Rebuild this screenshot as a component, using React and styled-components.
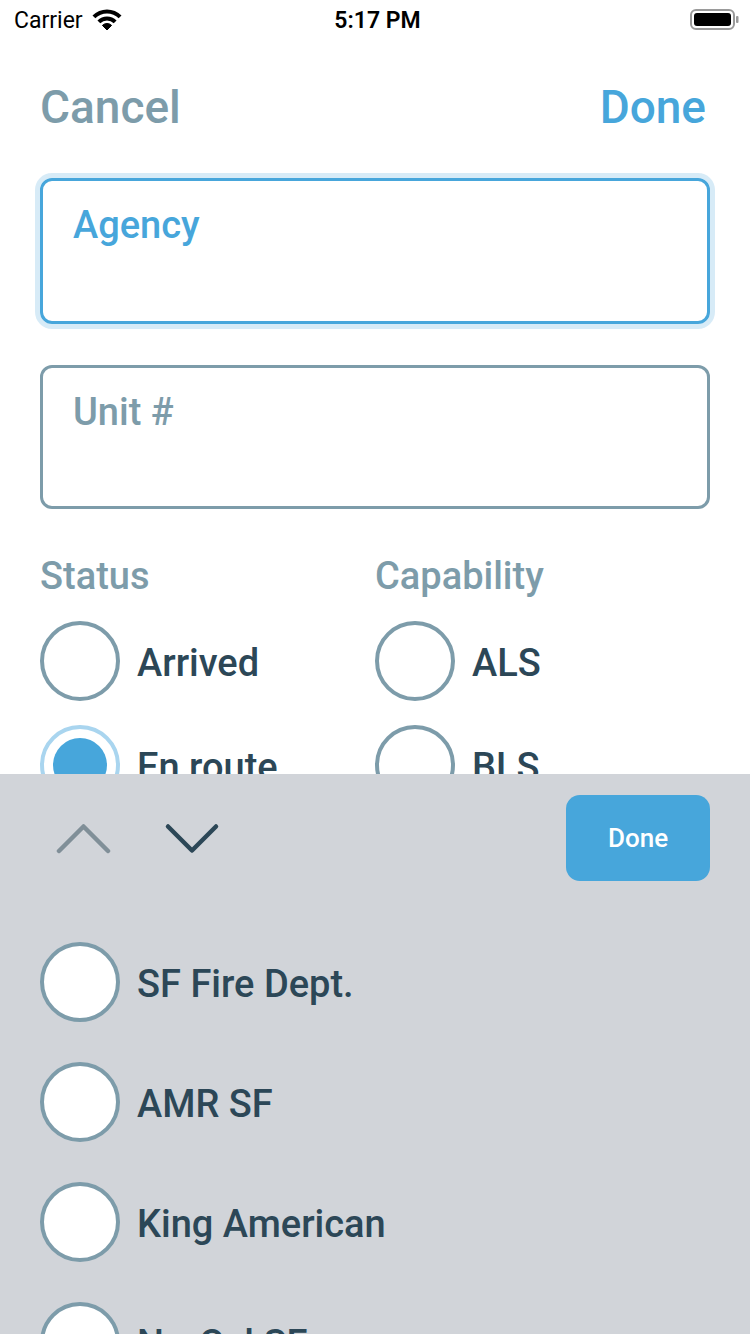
import React from "react";
import styled, { createGlobalStyle } from "styled-components";

const BLUE = "#47a6db";
const SLATE = "#7d9caa";
const INK = "#2c4757";
const PANEL = "#d1d4d9";

const Global = createGlobalStyle`
  html, body { margin: 0; padding: 0; background: #ffffff; }
  body { font-family: Roboto, "Noto Sans", sans-serif; }
  * { box-sizing: border-box; }
`;

const Screen = styled.div`
  width: 750px;
  height: 1334px;
  display: flex;
  flex-direction: column;
  overflow: hidden;
  background: #ffffff;
`;

const StatusBar = styled.div`
  height: 40px;
  flex: none;
  display: grid;
  grid-template-columns: 1fr auto 1fr;
  align-items: center;
  padding: 0 9px 0 14px;
  font-family: Roboto, "Liberation Sans", sans-serif;
  color: #000;
`;

const Carrier = styled.div`
  display: flex;
  align-items: center;
  gap: 9px;
  font-size: 23px;
  font-weight: 400;
`;

const Clock = styled.div`
  font-size: 23px;
  font-weight: 600;
`;

const BatteryWrap = styled.div`
  justify-self: end;
  display: flex;
  align-items: center;
`;

const Main = styled.div`
  flex: 1;
  min-height: 0;
  overflow: hidden;
  padding: 0 40px;
`;

const Header = styled.div`
  height: 134px;
  display: flex;
  align-items: center;
  justify-content: space-between;
`;

const HeaderButton = styled.span`
  font-size: 46px;
  font-weight: 500;
  color: ${(p) => (p.$primary ? BLUE : SLATE)};
  margin-right: ${(p) => (p.$primary ? 4 : 0)}px;
`;

const Field = styled.div`
  height: ${(p) => p.$h}px;
  margin-top: ${(p) => p.$mt}px;
  border: 3px solid ${(p) => (p.$focused ? BLUE : SLATE)};
  border-radius: 12px;
  padding: 22px 30px;
  box-shadow: ${(p) => (p.$focused ? "0 0 0 5px rgba(71,166,219,0.22)" : "none")};
`;

const FieldLabel = styled.div`
  font-size: 38px;
  line-height: 44px;
  font-weight: 500;
  color: ${(p) => (p.$focused ? BLUE : SLATE)};
`;

const Columns = styled.div`
  margin-top: 45px;
  display: grid;
  grid-template-columns: 335px 335px;
`;

const Column = styled.div`
  display: flex;
  flex-direction: column;
`;

const SectionTitle = styled.div`
  font-size: 38px;
  line-height: 44px;
  font-weight: 500;
  color: ${SLATE};
`;

const Options = styled.div`
  margin-top: ${(p) => p.$mt}px;
  display: flex;
  flex-direction: column;
  gap: ${(p) => p.$gap}px;
`;

const OptionRow = styled.div`
  display: flex;
  align-items: center;
  gap: 17px;
  height: 80px;
`;

const Radio = styled.div`
  width: 80px;
  height: 80px;
  flex: none;
  border-radius: 50%;
  border: 4px solid ${(p) => (p.$checked ? "#a9d5ef" : SLATE)};
  background: #ffffff;
  display: flex;
  align-items: center;
  justify-content: center;
`;

const RadioDot = styled.div`
  width: 54px;
  height: 54px;
  border-radius: 50%;
  background: ${BLUE};
`;

const OptionLabel = styled.span`
  font-size: 38px;
  font-weight: 500;
  color: ${INK};
  padding-top: 4px;
`;

const Panel = styled.div`
  height: 560px;
  flex: none;
  background: ${PANEL};
  overflow: hidden;
  display: flex;
  flex-direction: column;
`;

const Toolbar = styled.div`
  height: 128px;
  flex: none;
  display: flex;
  align-items: center;
  padding: 0 40px 0 55px;
`;

const NavGroup = styled.div`
  display: flex;
  align-items: center;
  gap: 53px;
`;

const DoneButton = styled.button`
  margin-left: auto;
  width: 144px;
  height: 86px;
  border: none;
  border-radius: 14px;
  background: ${BLUE};
  color: #ffffff;
  font-family: Roboto, sans-serif;
  font-size: 26px;
  font-weight: 500;
  padding: 0;
`;

const PickerList = styled.div`
  padding: 40px 40px 0;
  display: flex;
  flex-direction: column;
  gap: 40px;
`;

function sector(cx, cy, r1, r2, deg) {
  const s = Math.sin((deg * Math.PI) / 180);
  const c = Math.cos((deg * Math.PI) / 180);
  const p = (r, sign) => `${(cx + sign * r * s).toFixed(2)} ${(cy - r * c).toFixed(2)}`;
  if (r1 === 0) {
    return `M ${cx} ${cy} L ${p(r2, -1)} A ${r2} ${r2} 0 0 1 ${p(r2, 1)} Z`;
  }
  return `M ${p(r2, -1)} A ${r2} ${r2} 0 0 1 ${p(r2, 1)} L ${p(r1, 1)} A ${r1} ${r1} 0 0 0 ${p(r1, -1)} Z`;
}

const WifiIcon = () => (
  <svg width="30" height="22" viewBox="0 0 30 22">
    <path d={sector(15, 21, 0, 6.5, 45)} fill="#000" strokeLinejoin="round" stroke="#000" strokeWidth="1" />
    <path d={sector(15, 21, 9.5, 13.5, 45)} fill="#000" />
    <path d={sector(15, 21, 16.5, 20.5, 45)} fill="#000" />
  </svg>
);

const BatteryIcon = () => (
  <svg width="52" height="24" viewBox="0 0 52 24">
    <rect x="2" y="2" width="43" height="19" rx="5" fill="none" stroke="#9a9a9a" strokeWidth="2" />
    <rect x="5" y="5" width="37" height="13" rx="3" fill="#000" />
    <rect x="47" y="8" width="2.5" height="7" rx="1" fill="#9a9a9a" />
  </svg>
);

const ChevronUp = () => (
  <svg width="56" height="34" viewBox="0 0 56 34">
    <polyline points="4,30 28.5,5.5 53,30" fill="none" stroke="#808f98" strokeWidth="4.5" strokeLinecap="round" strokeLinejoin="round" />
  </svg>
);

const ChevronDown = () => (
  <svg width="56" height="34" viewBox="0 0 56 34">
    <polyline points="4,5.5 28,29.5 52,5.5" fill="none" stroke={INK} strokeWidth="4.5" strokeLinecap="round" strokeLinejoin="round" />
  </svg>
);

const Option = ({ label, checked }) => (
  <OptionRow>
    <Radio $checked={checked}>{checked && <RadioDot />}</Radio>
    <OptionLabel>{label}</OptionLabel>
  </OptionRow>
);

const status = [
  { label: "Arrived" },
  { label: "En route", checked: true },
  { label: "Staged" },
];
const capability = [{ label: "ALS" }, { label: "BLS" }, { label: "CCT" }];
const agencies = ["SF Fire Dept.", "AMR SF", "King American", "NorCal SF"];

export default function App() {
  return (
    <Screen>
      <Global />
      <StatusBar>
        <Carrier>
          <span>Carrier</span>
          <WifiIcon />
        </Carrier>
        <Clock>5:17 PM</Clock>
        <BatteryWrap>
          <BatteryIcon />
        </BatteryWrap>
      </StatusBar>
      <Main>
        <Header>
          <HeaderButton>Cancel</HeaderButton>
          <HeaderButton $primary>Done</HeaderButton>
        </Header>
        <Field $focused $h={146} $mt={4}>
          <FieldLabel $focused>Agency</FieldLabel>
        </Field>
        <Field $h={144} $mt={41}>
          <FieldLabel>Unit #</FieldLabel>
        </Field>
        <Columns>
          <Column>
            <SectionTitle>Status</SectionTitle>
            <Options $mt={23} $gap={24}>
              {status.map((o) => (
                <Option key={o.label} {...o} />
              ))}
            </Options>
          </Column>
          <Column>
            <SectionTitle>Capability</SectionTitle>
            <Options $mt={23} $gap={24}>
              {capability.map((o) => (
                <Option key={o.label} {...o} />
              ))}
            </Options>
          </Column>
        </Columns>
      </Main>
      <Panel>
        <Toolbar>
          <NavGroup>
            <ChevronUp />
            <ChevronDown />
          </NavGroup>
          <DoneButton>Done</DoneButton>
        </Toolbar>
        <PickerList>
          {agencies.map((a) => (
            <Option key={a} label={a} />
          ))}
        </PickerList>
      </Panel>
    </Screen>
  );
}
